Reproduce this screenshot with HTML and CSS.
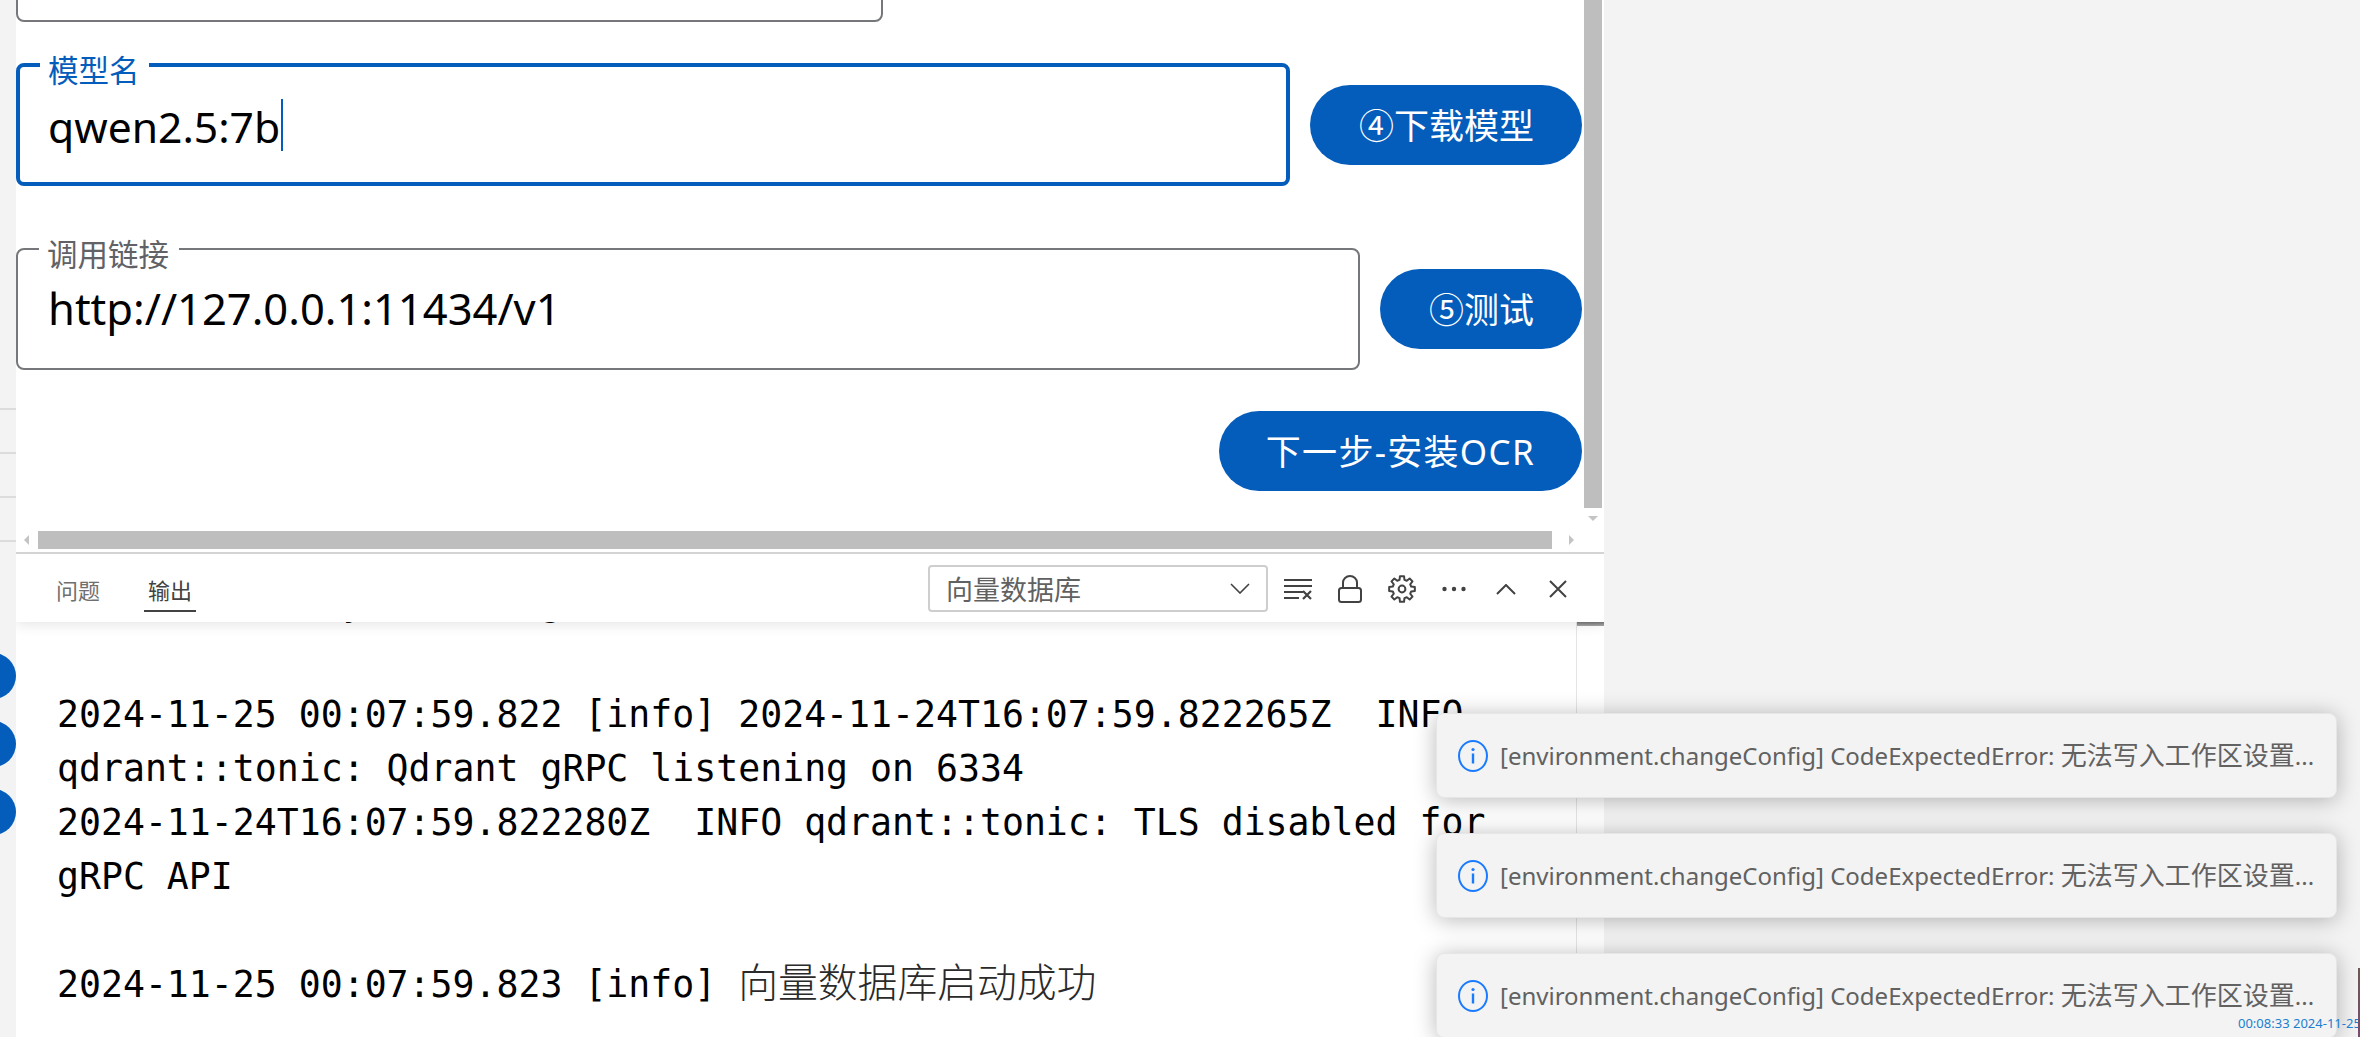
FILE: index.html
```html
<!DOCTYPE html>
<html lang="zh-CN">
<head>
<meta charset="utf-8">
<title>向量数据库</title>
<link rel="stylesheet" href="styles.css">
</head>
<body>
<div class="app">
  <aside class="rail">
    <div class="rail-lines"><i></i><i></i><i></i><i></i></div>
    <div class="rail-dots"><b></b><b></b><b></b></div>
  </aside>
  <main class="main">
    <section class="view">
      <div class="view-upper">
        <form class="form">
          <div class="card-clipped"></div>
          <div class="row row-model">
            <div class="field field-focus"><span class="field-label">模型名</span><span class="field-value">qwen2.5:7b<span class="caret"></span></span></div>
            <button type="button" class="btn">④下载模型</button>
          </div>
          <div class="row row-link">
            <div class="field"><span class="field-label">调用链接</span><span class="field-value">http://127.0.0.1:11434/v1</span></div>
            <button type="button" class="btn">⑤测试</button>
          </div>
          <div class="row row-next">
            <button type="button" class="btn btn-wide">下一步-安装OCR</button>
          </div>
        </form>
        <div class="vscroll"><div class="vthumb"></div><div class="arrow-down"></div></div>
      </div>
      <div class="hscroll"><div class="arrow-left"></div><div class="hthumb"></div><div class="arrow-right"></div></div>
    </section>
    <section class="panel">
      <header class="panel-head">
        <nav class="tabs">
          <span class="tab">问题</span>
          <span class="tab tab-on">输出</span>
        </nav>
        <div class="select"><span>向量数据库</span>
          <svg class="chev" width="20" height="11" viewBox="0 0 20 11"><path d="M1 1l9 9 9-9" fill="none" stroke="#424242" stroke-width="1.6"/></svg>
        </div>
        <div class="actions">
          <svg width="28" height="22" viewBox="0 0 28 22"><path d="M0 2h28M0 8h28M0 14h19M0 20h15" stroke="#424242" stroke-width="2" fill="none"/><path d="M19 13l8 8M27 13l-8 8" stroke="#424242" stroke-width="2.2" fill="none"/></svg>
          <svg class="ic-lock" width="24" height="28" viewBox="0 0 24 28"><path d="M5 13V7.5a7 6.5 0 0 1 14 0V13" fill="none" stroke="#424242" stroke-width="2"/><rect x="1" y="13" width="22" height="14" rx="2.5" fill="none" stroke="#424242" stroke-width="2"/></svg>
          <svg class="ic-gear" width="28" height="28" viewBox="0 0 28 28"><path d="M11.97 1.16H16.03L16.46 4.82 18.75 5.77 21.64 3.48 24.52 6.36 22.23 9.25 23.18 11.54 26.84 11.97V16.03L23.18 16.46 22.23 18.75 24.52 21.64 21.64 24.52 18.75 22.23 16.46 23.18 16.03 26.84H11.97L11.54 23.18 9.25 22.23 6.36 24.52 3.48 21.64 5.77 18.75 4.82 16.46 1.16 16.03V11.97L4.82 11.54 5.77 9.25 3.48 6.36 6.36 3.48 9.25 5.77 11.54 4.82Z" fill="none" stroke="#424242" stroke-width="2" stroke-linejoin="round"/><circle cx="14" cy="14" r="3.4" fill="none" stroke="#424242" stroke-width="2"/></svg>
          <svg class="ic-dots" width="24" height="6" viewBox="0 0 24 6"><circle cx="2.5" cy="3" r="2.2" fill="#424242"/><circle cx="12" cy="3" r="2.2" fill="#424242"/><circle cx="21.5" cy="3" r="2.2" fill="#424242"/></svg>
          <svg class="ic-up" width="20" height="11" viewBox="0 0 20 11"><path d="M1 10l9-9 9 9" fill="none" stroke="#424242" stroke-width="2"/></svg>
          <svg class="ic-x" width="18" height="18" viewBox="0 0 18 18"><path d="M1 1l16 16M17 1L1 17" fill="none" stroke="#424242" stroke-width="2"/></svg>
        </div>
      </header>
      <div class="log-wrap">
        <pre class="log"><span class="log-peek">             y        g</span>

2024-11-25 00:07:59.822 [info] 2024-11-24T16:07:59.822265Z  INFO
qdrant::tonic: Qdrant gRPC listening on 6334
2024-11-24T16:07:59.822280Z  INFO qdrant::tonic: TLS disabled for
gRPC API

2024-11-25 00:07:59.823 [info] <span class="log-cjk">向量数据库启动成功</span></pre>
        <div class="log-scroll"><div class="log-slider"></div></div>
      </div>
    </section>
  </main>
  <div class="toasts">
    <div class="toast">
      <svg class="ic-info" width="30" height="32" viewBox="0 0 30 32"><ellipse cx="15" cy="16" rx="14" ry="15" fill="none" stroke="#1a7bff" stroke-width="2"/><path d="M15 13.5v10" stroke="#1a7bff" stroke-width="2.4"/><circle cx="15" cy="9.5" r="1.6" fill="#1a7bff"/></svg>
      <span class="toast-text">[environment.changeConfig] CodeExpectedError: <span class="toast-cjk">无法写入工作区设置</span>...</span>
    </div>
    <div class="toast">
      <svg class="ic-info" width="30" height="32" viewBox="0 0 30 32"><ellipse cx="15" cy="16" rx="14" ry="15" fill="none" stroke="#1a7bff" stroke-width="2"/><path d="M15 13.5v10" stroke="#1a7bff" stroke-width="2.4"/><circle cx="15" cy="9.5" r="1.6" fill="#1a7bff"/></svg>
      <span class="toast-text">[environment.changeConfig] CodeExpectedError: <span class="toast-cjk">无法写入工作区设置</span>...</span>
    </div>
    <div class="toast">
      <svg class="ic-info" width="30" height="32" viewBox="0 0 30 32"><ellipse cx="15" cy="16" rx="14" ry="15" fill="none" stroke="#1a7bff" stroke-width="2"/><path d="M15 13.5v10" stroke="#1a7bff" stroke-width="2.4"/><circle cx="15" cy="9.5" r="1.6" fill="#1a7bff"/></svg>
      <span class="toast-text">[environment.changeConfig] CodeExpectedError: <span class="toast-cjk">无法写入工作区设置</span>...</span>
    </div>
  </div>
  <div class="clock">00:08:33 2024-11-25</div>
  <div class="edge"></div>
</div>
</body>
</html>
```

FILE: styles.css
```css
* { box-sizing: border-box; }
html, body { margin: 0; padding: 0; }
body {
  font-family: "Noto Sans", "Noto Sans CJK SC", sans-serif;
  background: #f3f3f3;
  overflow: hidden;
}
.app {
  position: relative;
  display: flex;
  width: 2360px;
  height: 1037px;
  overflow: hidden;
  background: #f3f3f3;
}

/* left rail */
.rail {
  position: relative;
  flex: 0 0 16px;
  overflow: hidden;
}
.rail-lines {
  display: flex;
  flex-direction: column;
  gap: 42px;
  padding-top: 408px;
}
.rail-lines i { display: block; height: 2px; background: #dcdcdc; }
.rail-dots {
  display: flex;
  flex-direction: column;
  gap: 22px;
  width: 46px;
  margin: 111px 0 0 -30px;
}
.rail-dots b { display: block; height: 46px; border-radius: 50%; background: #045cbb; }

/* main column */
.main {
  flex: 0 0 1588px;
  display: flex;
  flex-direction: column;
  background: #fff;
  position: relative;
}
.view {
  flex: 0 0 554px;
  display: flex;
  flex-direction: column;
  border-bottom: 2px solid #d4d4d4;
}
.view-upper {
  flex: 0 0 530px;
  display: flex;
  overflow: hidden;
}
.form {
  flex: 0 0 1568px;
  display: flex;
  flex-direction: column;
  padding: 0 2px 0 0;
}
.card-clipped {
  flex: 0 0 auto;
  width: 867px;
  height: 80px;
  margin: -58px 0 41px;
  border: 2px solid #76777a;
  border-radius: 8px;
}
.row {
  display: flex;
  align-items: center;
  gap: 20px;
}
.row-model { height: 123px; margin-bottom: 62px; }
.row-link { height: 122px; margin-bottom: 41px; }
.row-next { justify-content: flex-end; }
.field {
  position: relative;
  flex: 1 1 auto;
  align-self: stretch;
  display: flex;
  align-items: center;
  padding: 0 30px 0 30px;
  border: 2px solid #76777a;
  border-radius: 8px;
  background: #fff;
}
.field-focus { border: 4px solid #045cbb; padding-left: 28px; }
.field-label {
  position: absolute;
  left: 21px;
  top: -16px;
  padding: 0 10px 0 8px;
  background: #fff;
  font-size: 30.5px;
  line-height: 40px;
  color: #616266;
}
.field-focus .field-label { left: 20px; top: -17px; padding-right: 9px; color: #045cbb; }
.field-value {
  position: relative;
  top: -1px;
  font-size: 43.5px;
  line-height: 56px;
  color: #000;
}
.field-focus .field-value { top: 3px; font-size: 42.6px; }
.caret {
  display: inline-block;
  position: relative;
  top: -6px;
  width: 2px;
  height: 52px;
  margin-left: 1px;
  background: #045cbb;
  vertical-align: middle;
}
.btn {
  flex: 0 0 auto;
  height: 80px;
  padding: 2px 48px 0 49px;
  border: 0;
  border-radius: 40px;
  background: #045cbb;
  color: #fff;
  font-family: inherit;
  font-size: 35px;
  line-height: 78px;
  white-space: nowrap;
}
.btn-wide { letter-spacing: 1.3px; padding-left: 47px; padding-right: 47px; }

/* scrollbars */
.vscroll { flex: 0 0 20px; display: flex; flex-direction: column; align-items: flex-start; }
.vthumb { width: 18px; height: 508px; background: #bebebe; }
.arrow-down {
  margin: 8px 0 0 4px;
  border-left: 5px solid transparent;
  border-right: 5px solid transparent;
  border-top: 5px solid #c4c4c4;
}
.hscroll {
  flex: 0 0 22px;
  display: flex;
  align-items: center;
  padding: 0 30px 2px 8px;
}
.arrow-left {
  border-top: 5px solid transparent;
  border-bottom: 5px solid transparent;
  border-right: 5px solid #c4c4c4;
  margin-right: 9px;
}
.hthumb { flex: 0 0 1514px; height: 18px; background: #bebebe; }
.arrow-right {
  margin-left: 17px;
  border-top: 5px solid transparent;
  border-bottom: 5px solid transparent;
  border-left: 5px solid #c4c4c4;
}

/* output panel */
.panel { flex: 1 1 auto; display: flex; flex-direction: column; min-height: 0; overflow: hidden; }
.panel-head {
  position: relative;
  z-index: 2;
  flex: 0 0 68px;
  display: flex;
  align-items: flex-start;
  background: #fff;
  box-shadow: 0 3px 12px rgba(0,0,0,.1);
}
.tabs { display: flex; gap: 48px; padding: 19px 0 0 40px; flex: 0 0 912px; }
.tab { font-size: 22px; line-height: 34px; color: #6f6f6f; height: 39px; }
.tab-on { color: #424242; padding: 0 4px; margin-left: -4px; border-bottom: 2px solid #424242; }
.select {
  flex: 0 0 340px;
  height: 47px;
  margin-top: 11px;
  display: flex;
  align-items: center;
  justify-content: space-between;
  padding: 0 16px 0 16px;
  border: 2px solid #cecece;
  border-radius: 4px;
  font-size: 27px;
  color: #616161;
}
.actions {
  display: flex;
  align-items: center;
  height: 68px;
  margin-left: 16px;
  padding-top: 2px;
}
.ic-lock { margin-left: 26px; }
.ic-gear { margin-left: 26px; }
.ic-dots { margin-left: 26px; }
.ic-up { margin-left: 30px; }
.ic-x { margin-left: 33px; }

.log-wrap {
  flex: 1 1 auto;
  position: relative;
  display: flex;
  overflow: hidden;
  min-height: 0;
}
.log {
  flex: 1 1 auto;
  margin: -42px 0 0;
  padding-left: 41px;
  font-family: "DejaVu Sans Mono", "Noto Sans CJK SC", monospace;
  font-size: 36.5px;
  line-height: 54px;
  color: #000;
  white-space: pre;
}
.log-peek { display: inline-block; transform: translateY(-4px); }
.log-cjk { color: #2a2a2a; font-family: "Noto Sans CJK SC", sans-serif; font-size: 39.8px; font-weight: 300; line-height: 1; }
.log-scroll {
  flex: 0 0 28px;
  margin-left: -28px;
  position: relative;
  background: #fff;
  border-left: 1px solid #e5e5e5;
}
.log-slider { height: 4px; background: linear-gradient(#777, #a8a8a8); }

/* toasts */
.toasts {
  position: absolute;
  left: 1436px;
  top: 713px;
  width: 901px;
  display: flex;
  flex-direction: column;
  gap: 35px;
  z-index: 5;
}
.toast {
  flex: 0 0 85px;
  display: flex;
  align-items: center;
  gap: 12px;
  padding: 0 0 0 21px;
  background: #f3f3f3;
  border-radius: 8px;
  border: 1px solid #e6e6e6;
  box-shadow: 0 2px 22px rgba(0,0,0,.28);
}
.ic-info { flex: 0 0 auto; }
.toast-text {
  font-size: 24px;
  line-height: 36px;
  color: #616161;
  white-space: nowrap;
}
.toast-cjk { font-size: 26px; line-height: 1; }
.clock {
  position: absolute;
  left: 2238px;
  top: 1015px;
  z-index: 6;
  font-family: "Noto Sans", sans-serif;
  font-size: 13px;
  line-height: 16px;
  color: #1a7fd0;
  white-space: nowrap;
}
.edge {
  position: absolute;
  right: 0;
  top: 968px;
  width: 2px;
  height: 69px;
  z-index: 7;
  background: linear-gradient(#6b5a55, #7a4a70);
}
```
